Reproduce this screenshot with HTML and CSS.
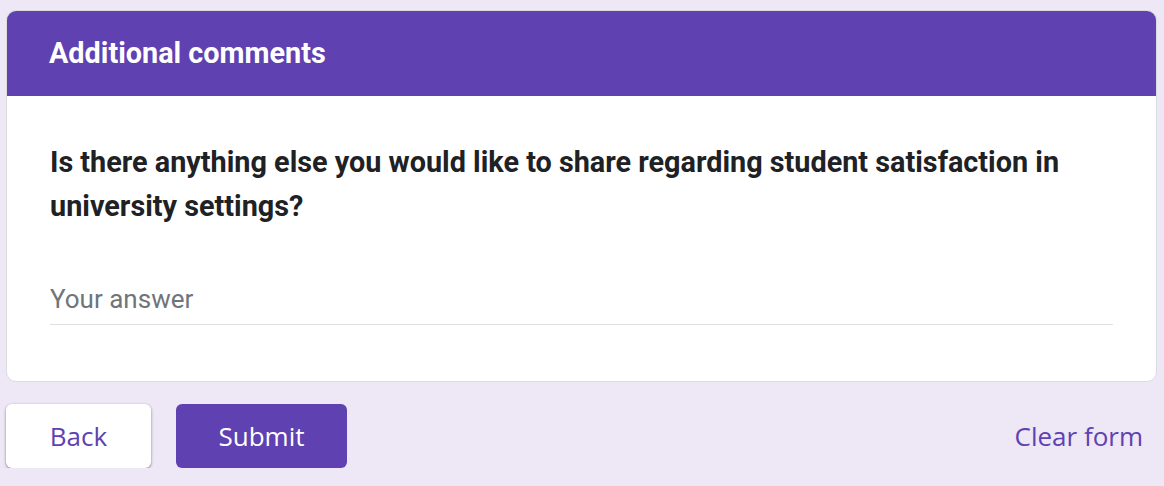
FILE: index.html
```html
<!DOCTYPE html>
<html>
<head>
<meta charset="utf-8">
<link rel="stylesheet" href="styles.css">
</head>
<body>
<div class="page">
  <section class="card">
    <header class="card-head">Additional comments</header>
    <div class="card-body">
      <div class="question">Is there anything else you would like to share regarding student satisfaction in university settings?</div>
      <div class="answer">Your answer</div>
    </div>
  </section>
  <div class="actions">
    <div class="left">
      <button class="btn btn-back">Back</button>
      <button class="btn btn-submit">Submit</button>
    </div>
    <button class="clear">Clear form</button>
  </div>
</div>
</body>
</html>
```
FILE: styles.css
```css
html, body {
  margin: 0;
  padding: 0;
  background: #ede7f6;
  font-family: Roboto, "Liberation Sans", sans-serif;
}
.page {
  padding: 10px 7px 0 6px;
}
.card {
  background: #fff;
  border: 1px solid #dadce0;
  border-radius: 10px;
  overflow: hidden;
}
.card-head {
  background: #6041b1;
  color: #fff;
  font-weight: 700;
  font-size: 28.8px;
  height: 86px;
  display: flex;
  align-items: center;
  padding: 0 43px;
  margin: -1px -1px 0 -1px;
  box-sizing: border-box;
}
.card-body {
  padding: 44px 43px 56px 43px;
}
.question {
  font-weight: 700;
  font-size: 28.8px;
  line-height: 44px;
  color: #202124;
}
.answer {
  margin-top: 56px;
  font-size: 26px;
  line-height: 30px;
  color: #70757a;
  padding-bottom: 10px;
  border-bottom: 1px solid #e0e0e0;
}
.actions {
  display: flex;
  justify-content: space-between;
  align-items: center;
  margin-top: 22px;
}
.left {
  display: flex;
  gap: 25px;
}
.btn {
  height: 64px;
  border: none;
  border-radius: 6px;
  font-family: "Open Sans", sans-serif;
  font-size: 26px;
  font-weight: 500;
  cursor: pointer;
}
.btn-back {
  width: 145px;
  background: #fff;
  color: #6041b1;
  box-shadow: 0 1px 2px rgba(0,0,0,0.3), 0 1px 3px 1px rgba(0,0,0,0.12);
}
.btn-submit {
  width: 171px;
  background: #6041b1;
  color: #fff;
}
.clear {
  background: none;
  border: none;
  color: #6041b1;
  font-family: "Open Sans", sans-serif;
  font-size: 26px;
  font-weight: 500;
  padding: 0 14px 0 0;
}
```
